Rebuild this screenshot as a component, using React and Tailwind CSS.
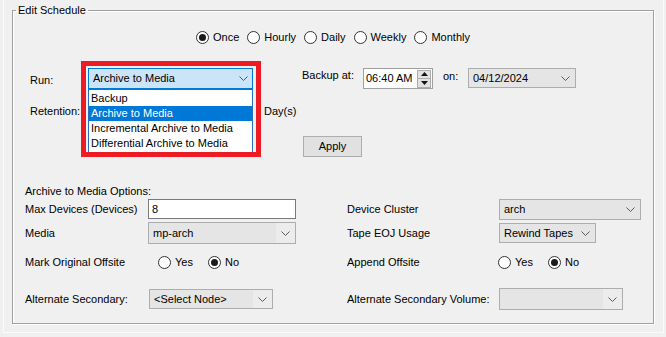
import React from 'react';

function Chevron() {
  return (
    <svg width="9" height="5" viewBox="0 0 9 5">
      <path d="M0.5 0.5 L4.5 4.5 L8.5 0.5" fill="none" stroke="#5a5a5a" strokeWidth="1" />
    </svg>
  );
}

function Radio({ checked, label }) {
  return (
    <div className="flex items-center gap-[4px]">
      <span className="flex h-[13px] w-[13px] items-center justify-center rounded-full border border-[#333] bg-white">
        {checked && <span className="h-[7px] w-[7px] rounded-full bg-[#1a1a1a]" />}
      </span>
      <span>{label}</span>
    </div>
  );
}

function Combo({ className, text, split }) {
  return (
    <div className={`flex items-center border border-[#adadad] bg-[#e5e5e5] ${className}`}>
      <div className="flex-1 truncate pl-[4px]">{text}</div>
      <div
        className={`flex w-[19px] items-center justify-center self-stretch ${split ? 'bg-[#ececec]' : ''}`}
      >
        <Chevron />
      </div>
    </div>
  );
}

function YesNo() {
  return (
    <div className="flex items-center">
      <div className="w-[50px]">
        <Radio label="Yes" />
      </div>
      <Radio checked label="No" />
    </div>
  );
}

const runOptions = ['Backup', 'Archive to Media', 'Incremental Archive to Media', 'Differential Archive to Media'];

export default function App() {
  return (
    <div className="h-[337px] w-[666px] overflow-hidden bg-[#f0f0f0] font-['Liberation_Sans',Arial,sans-serif] text-[11px] leading-[13px] text-black">
      <div className="ml-[3px] h-[333px] w-[661px] border-x border-b border-[#fbfbfb] pl-[8px] pt-[4px]">
        <fieldset className="w-[642px] border border-[#a0a0a0] pb-[13px] shadow-[inset_1px_1px_0_#fff,1px_1px_0_#fff]">
          <legend className="ml-[3px] px-[2px]">Edit Schedule</legend>

          {/* frequency */}
          <div className="ml-[183px] mt-[13px] flex h-[14px] items-center gap-[8px]">
            <Radio checked label="Once" />
            <Radio label="Hourly" />
            <Radio label="Daily" />
            <Radio label="Weekly" />
            <Radio label="Monthly" />
          </div>

          {/* run row */}
          <div className="mt-[24px] flex h-[21px] items-start pl-[17px]">
            <span className="mt-[6px] w-[58px]">Run:</span>
            <div className="relative w-[165px]">
              <div className="flex h-[21px] items-center border border-[#0078d7] bg-[#cce4f7]">
                <div className="flex-1 pl-[4px]">Archive to Media</div>
                <div className="flex w-[17px] items-center justify-center">
                  <Chevron />
                </div>
              </div>
              <div className="absolute left-0 top-full z-10 w-[165px] border border-[#2a6fb5] bg-white py-[1px]">
                {runOptions.map((option) => (
                  <div
                    className={`flex h-[15px] items-center pl-[2px] ${
                      option === 'Archive to Media' ? 'bg-[#0078d7] text-white' : ''
                    }`}
                    key={option}
                  >
                    {option}
                  </div>
                ))}
              </div>
              <div className="pointer-events-none absolute left-[-7px] top-[-7px] z-20 h-[96px] w-[180px] border-[5px] border-[#ed1c24]" />
            </div>
            <span className="ml-[49px] mt-[1px] w-[61px]">Backup at:</span>
            <div className="flex h-[21px] w-[70px] items-center border border-[#a0a0a0] bg-white">
              <span className="flex-1 pl-[2px]">06:40 AM</span>
              <div className="mr-[1px] flex flex-col">
                <div className="flex h-[9px] w-[14px] items-center justify-center border border-[#adadad] bg-[#e1e1e1]">
                  <svg width="7" height="4" viewBox="0 0 7 4">
                    <path d="M0 4 L3.5 0 L7 4 Z" fill="#111" />
                  </svg>
                </div>
                <div className="flex h-[9px] w-[14px] items-center justify-center border border-t-0 border-[#adadad] bg-[#e1e1e1]">
                  <svg width="7" height="4" viewBox="0 0 7 4">
                    <path d="M0 0 L7 0 L3.5 4 Z" fill="#111" />
                  </svg>
                </div>
              </div>
            </div>
            <span className="ml-[10px] mt-[2px] w-[25px]">on:</span>
            <Combo className="h-[20px] w-[108px]" text="04/12/2024" />
          </div>

          {/* retention row */}
          <div className="mt-[12px] flex h-[21px] items-center pl-[17px]">
            <span className="w-[58px]">Retention:</span>
            <div className="w-[176px]" />
            <span>Day(s)</span>
          </div>

          <button
            className="ml-[290px] mt-[14px] h-[21px] w-[59px] border border-[#adadad] bg-[#e1e1e1] text-center"
            type="button"
          >
            Apply
          </button>

          {/* options */}
          <div className="mt-[28px] pl-[12px]">Archive to Media Options:</div>

          <div className="flex h-[22px] items-center pl-[12px]">
            <div className="flex w-[322px] items-center">
              <span className="w-[123px]">Max Devices (Devices)</span>
              <div className="flex h-[20px] w-[148px] items-center border border-[#7a7a7a] bg-white pl-[3px]">8</div>
            </div>
            <div className="flex items-center">
              <span className="w-[152px]">Device Cluster</span>
              <Combo className="h-[21px] w-[142px]" text="arch" />
            </div>
          </div>

          <div className="mt-[2px] flex h-[22px] items-center pl-[12px]">
            <div className="flex w-[322px] items-center">
              <span className="w-[123px]">Media</span>
              <Combo className="h-[22px] w-[148px]" split text="mp-arch" />
            </div>
            <div className="flex items-center">
              <span className="w-[152px]">Tape EOJ Usage</span>
              <Combo className="h-[20px] w-[97px]" text="Rewind Tapes" />
            </div>
          </div>

          <div className="mt-[11px] flex h-[14px] items-center pl-[12px]">
            <div className="flex w-[322px] items-center">
              <span className="w-[133px]">Mark Original Offsite</span>
              <YesNo />
            </div>
            <div className="flex items-center">
              <span className="w-[151px]">Append Offsite</span>
              <YesNo />
            </div>
          </div>

          <div className="mt-[19px] flex h-[22px] items-center pl-[12px]">
            <div className="flex w-[322px] items-center">
              <span className="w-[124px]">Alternate Secondary:</span>
              <Combo className="h-[20px] w-[124px]" split text="<Select Node>" />
            </div>
            <div className="flex items-center">
              <span className="w-[152px]">Alternate Secondary Volume:</span>
              <Combo className="h-[22px] w-[124px]" split text="" />
            </div>
          </div>
        </fieldset>
      </div>
    </div>
  );
}
